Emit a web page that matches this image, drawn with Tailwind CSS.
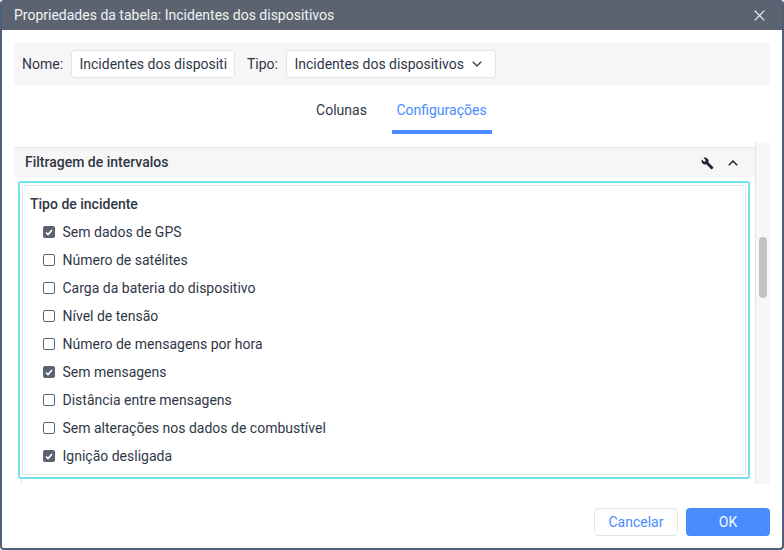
<!DOCTYPE html>
<html lang="pt">
<head>
<meta charset="utf-8">
<script src="https://cdn.jsdelivr.net/npm/@tailwindcss/browser@4"></script>
</head>
<body class="bg-white">
<div class="w-[784px] h-[550px] flex flex-col overflow-hidden rounded-[4px] border-2 border-t-0 border-[#4f6079] bg-white font-['Roboto',sans-serif] text-[14px] text-[#2f3746]">
  <div class="h-[30px] shrink-0 -mx-[2px] flex items-center justify-between bg-[#5c6370] border-t border-[#4f6079] pl-[14px] pr-[19px] text-[#f1f2f4]">
    <span>Propriedades da tabela: Incidentes dos dispositivos</span>
    <svg class="w-[11px] h-[11px]" viewBox="0 0 11 11" fill="none" stroke="#f4f5f6" stroke-width="1.2"><path d="M.7.7l9.600 9.600M10.300.7L.7 10.300"/></svg>
  </div>
  <div class="mx-[12px] mt-[12px] h-[44px] shrink-0 flex items-center rounded-[4px] bg-[#f6f6f6] pl-[8px]">
    <span class="w-[49px]">Nome:</span>
    <div class="w-[164px] h-[28px] flex items-center overflow-hidden whitespace-nowrap rounded-[4px] border border-[#e4e4e4] bg-white pl-[7.5px] pr-[7px]">Incidentes dos dispositi</div>
    <span class="ml-[12px] w-[39px]">Tipo:</span>
    <div class="w-[210px] h-[28px] flex items-center justify-between rounded-[4px] border border-[#e4e4e4] bg-white pl-[7.5px] pr-[13px]">
      <span class="whitespace-nowrap">Incidentes dos dispositivos</span>
      <svg class="w-[10px] h-[6px]" viewBox="0 0 10 6" fill="none" stroke="#3c4350" stroke-width="1.4"><path d="M.8.8L5 5l4.200-4.200"/></svg>
    </div>
  </div>
  <div class="h-[48px] shrink-0 flex justify-center">
    <div class="w-[100px] h-[48px] flex items-start justify-center pt-[14px] pr-[1px]">Colunas</div>
    <div class="w-[100px] h-[48px] flex items-start justify-center pt-[14px] pr-[1px] border-b-[4px] border-[#4a8cff] text-[#4a8cff]">Configurações</div>
  </div>
  <div class="mx-[12px] mt-[8px] h-[342px] shrink-0 flex overflow-hidden">
    <div class="w-[741px] shrink-0 flex flex-col">
      <div class="h-[5px] shrink-0"></div>
      <div class="h-[30px] shrink-0 flex items-center justify-between bg-[#f6f6f6] border-t border-[#e6e6e6] pl-[11px] pr-[17px] font-medium">
        <span>Filtragem de intervalos</span>
        <div class="flex items-center gap-[14px]">
          <svg class="w-[13px] h-[13px] mt-[2px]" viewBox="0 0 24 24" fill="#1f2733"><path d="M22.700 19l-9.100-9.100c.9-2.300.4-5-1.500-6.900-2-2-5-2.400-7.400-1.300L9 6 6 9 1.600 4.700C.4 7.100.9 10.100 2.900 12.100c1.900 1.900 4.600 2.400 6.900 1.500l9.100 9.100c.4.400 1 .4 1.400 0l2.300-2.300c.5-.4.500-1.100.1-1.400z"/></svg>
          <svg class="w-[10px] h-[6px]" viewBox="0 0 10 6" fill="none" stroke="#1f2733" stroke-width="1.5"><path d="M.8 5.200L5 1l4.200 4.200"/></svg>
        </div>
      </div>
      <div class="relative mt-[4px] ml-[4px] w-[732px] h-[298px] shrink-0 rounded-[3px] border-2 border-[#6fe3ef] p-[2px]">
        <div class="h-[290px] w-[724px] rounded-[2px] border border-[#e4e4e4] bg-white pl-[7px] pt-[8px]">
          <div class="h-[20px] leading-[20px] font-medium">Tipo de incidente</div>
          <div class="mt-[4px] pl-[13px] flex flex-col">
            <label class="h-[28px] flex items-center gap-[7.5px]"><span class="w-[12px] h-[12px] rounded-[2px] bg-[#5c6370] flex items-center justify-center"><svg class="w-[8px] h-[7px]" viewBox="0 0 8 7" fill="none" stroke="#fff" stroke-width="1.6"><path d="M1 3.500L3 5.500 7 1"/></svg></span>Sem dados de GPS</label>
            <label class="h-[28px] flex items-center gap-[7.5px]"><span class="w-[12px] h-[12px] rounded-[2px] border border-[#5c6370]"></span>Número de satélites</label>
            <label class="h-[28px] flex items-center gap-[7.5px]"><span class="w-[12px] h-[12px] rounded-[2px] border border-[#5c6370]"></span>Carga da bateria do dispositivo</label>
            <label class="h-[28px] flex items-center gap-[7.5px]"><span class="w-[12px] h-[12px] rounded-[2px] border border-[#5c6370]"></span>Nível de tensão</label>
            <label class="h-[28px] flex items-center gap-[7.5px]"><span class="w-[12px] h-[12px] rounded-[2px] border border-[#5c6370]"></span>Número de mensagens por hora</label>
            <label class="h-[28px] flex items-center gap-[7.5px]"><span class="w-[12px] h-[12px] rounded-[2px] bg-[#5c6370] flex items-center justify-center"><svg class="w-[8px] h-[7px]" viewBox="0 0 8 7" fill="none" stroke="#fff" stroke-width="1.6"><path d="M1 3.500L3 5.500 7 1"/></svg></span>Sem mensagens</label>
            <label class="h-[28px] flex items-center gap-[7.5px]"><span class="w-[12px] h-[12px] rounded-[2px] border border-[#5c6370]"></span>Distância entre mensagens</label>
            <label class="h-[28px] flex items-center gap-[7.5px]"><span class="w-[12px] h-[12px] rounded-[2px] border border-[#5c6370]"></span>Sem alterações nos dados de combustível</label>
            <label class="h-[28px] flex items-center gap-[7.5px]"><span class="w-[12px] h-[12px] rounded-[2px] bg-[#5c6370] flex items-center justify-center"><svg class="w-[8px] h-[7px]" viewBox="0 0 8 7" fill="none" stroke="#fff" stroke-width="1.6"><path d="M1 3.500L3 5.500 7 1"/></svg></span>Ignição desligada</label>
          </div>
        </div>
        <div class="absolute left-[1px] top-[296px] w-px h-[6px] bg-[#e4e4e4]"></div>
      </div>
    </div>
    <div class="w-[15px] shrink-0 h-[342px] bg-[#f7f7f7] border-l border-[#e6e6e6] pl-[3px] pt-[95px]">
      <div class="w-[8px] h-[61px] rounded-[4px] bg-[#c3c3c3]"></div>
    </div>
  </div>
  <div class="flex-1 flex items-start justify-end gap-[8px] pt-[24px] pr-[12px]">
    <div class="w-[84px] h-[28px] flex items-center justify-center rounded-[4px] border border-[#e4e4e4] bg-white text-[#4a8cff]">Cancelar</div>
    <div class="w-[84px] h-[28px] flex items-center justify-center rounded-[4px] bg-[#4a8cff] text-[#f4f8ff]">OK</div>
  </div>
</div>
</body>
</html>
